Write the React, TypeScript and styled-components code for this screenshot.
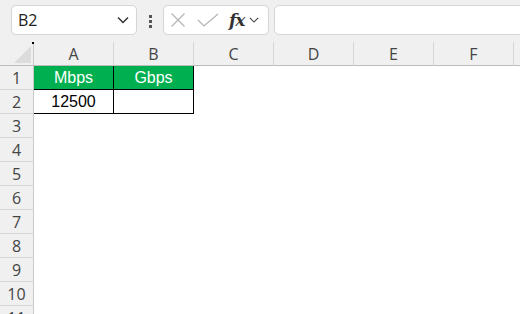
import React from 'react';
import styled, { createGlobalStyle } from 'styled-components';

const GlobalStyle = createGlobalStyle`
  html, body {
    margin: 0;
    padding: 0;
    background: #ffffff;
    overflow: hidden;
  }
`;

const Page = styled.div`
  width: 520px;
  height: 314px;
  background: #ffffff;
  font-family: 'Open Sans', 'Noto Sans', sans-serif;
  overflow: hidden;
`;

const Toolbar = styled.div`
  display: flex;
  align-items: flex-start;
  height: 42px;
  padding: 5px 0 0 11px;
  box-sizing: border-box;
  background: #f0f0f0;
  overflow: hidden;
`;

const Box = styled.div<{ w: number }>`
  display: flex;
  align-items: center;
  box-sizing: border-box;
  width: ${p => p.w}px;
  height: 30px;
  background: #ffffff;
  border: 1px solid #d5d5d5;
  border-radius: 5px;
  flex-shrink: 0;
`;

const NameText = styled.span`
  flex: 1;
  padding-left: 6px;
  font-size: 16px;
  color: #222222;
`;

const Dots = styled.div`
  display: flex;
  flex-direction: column;
  gap: 2px;
  width: 26px;
  flex-shrink: 0;
  align-items: center;
  padding-top: 10px;
`;

const Dot = styled.span`
  width: 3px;
  height: 3px;
  background: #555555;
`;

const Fx = styled.span`
  font-family: 'DejaVu Serif', 'Liberation Serif', serif;
  font-style: italic;
  font-weight: bold;
  font-size: 17px;
  color: #333333;
  margin-left: 10px;
  letter-spacing: -1px;
`;

const Grid = styled.div`
  display: grid;
  grid-template-columns: 34px repeat(7, 80px);
  grid-auto-rows: 24px;
`;

const Corner = styled.div`
  position: relative;
  background: #f0f0f0;
  border-right: 1px solid #c9c9c9;
  border-bottom: 1px solid #bcbcbc;
  &::after {
    content: '';
    position: absolute;
    right: 2px;
    bottom: 2px;
    width: 0;
    height: 0;
    border-left: 17px solid transparent;
    border-bottom: 17px solid #dcdcdc;
  }
  &::before {
    content: '';
    position: absolute;
    right: -1px;
    top: 0;
    width: 2px;
    height: 2px;
    background: #000;
  }
`;

const ColHead = styled.div`
  display: flex;
  align-items: center;
  justify-content: center;
  background: #f0f0f0;
  border-right: 1px solid #d6d6d6;
  border-bottom: 1px solid #bcbcbc;
  font-size: 16px;
  color: #444444;
`;

const RowHead = styled.div`
  display: flex;
  align-items: center;
  justify-content: center;
  background: #f0f0f0;
  border-right: 1px solid #c9c9c9;
  border-bottom: 1px solid #d8d8d8;
  font-size: 16px;
  color: #444444;
`;

const Cell = styled.div<{ boxed?: boolean; head?: boolean }>`
  display: flex;
  align-items: center;
  justify-content: center;
  box-sizing: border-box;
  background: ${p => (p.head ? '#00b050' : '#ffffff')};
  color: ${p => (p.head ? '#ffffff' : '#000000')};
  border-right: 1px solid ${p => (p.boxed ? '#000000' : 'transparent')};
  border-bottom: 1px solid ${p => (p.boxed ? '#000000' : 'transparent')};
  font-family: 'Liberation Sans', Arial, sans-serif;
  font-size: 16px;
`;

const cols = ['A', 'B', 'C', 'D', 'E', 'F', 'G'];

const Chevron = ({ x, size }: { x: number; size: number }) => (
  <svg width={size + 2} height={size} viewBox="0 0 12 8" style={{ marginLeft: x }}>
    <path d="M1 1.5 L6 6.5 L11 1.5" fill="none" stroke="#444" strokeWidth="1.3" />
  </svg>
);

const App: React.FC = () => {
  const data: Record<string, { text: string; head?: boolean }> = {
    A1: { text: 'Mbps', head: true },
    B1: { text: 'Gbps', head: true },
    A2: { text: '12500' },
    B2: { text: '' },
  };

  return (
    <Page>
      <GlobalStyle />
      <Toolbar>
        <Box w={126}>
          <NameText>B2</NameText>
          <svg width="12" height="8" viewBox="0 0 12 8" style={{ marginRight: 7 }}>
            <path d="M1 1.5 L6 6.5 L11 1.5" fill="none" stroke="#333" strokeWidth="1.5" />
          </svg>
        </Box>
        <Dots>
          <Dot />
          <Dot />
          <Dot />
        </Dots>
        <Box w={106}>
          <svg width="16" height="16" viewBox="0 0 16 16" style={{ marginLeft: 6 }}>
            <path d="M1.5 1.5 L14.5 14.5 M14.5 1.5 L1.5 14.5" stroke="#b4b4b4" strokeWidth="1.2" fill="none" />
          </svg>
          <svg width="22" height="14" viewBox="0 0 22 14" style={{ marginLeft: 11 }}>
            <path d="M1 7 L7 13 L21 1" stroke="#b4b4b4" strokeWidth="1.2" fill="none" />
          </svg>
          <Fx>fx</Fx>
          <Chevron x={5} size={8} />
        </Box>
        <Box w={260} style={{ marginLeft: 5 }} />
      </Toolbar>
      <Grid>
        <Corner />
        {cols.map(c => (
          <ColHead key={c}>{c}</ColHead>
        ))}
        {Array.from({ length: 11 }, (_, i) => i + 1).map(r => (
          <React.Fragment key={r}>
            <RowHead>{r}</RowHead>
            {cols.map(c => {
              const d = data[c + r];
              return (
                <Cell key={c} boxed={!!d} head={d?.head}>
                  {d?.text}
                </Cell>
              );
            })}
          </React.Fragment>
        ))}
      </Grid>
    </Page>
  );
};

export default App;
